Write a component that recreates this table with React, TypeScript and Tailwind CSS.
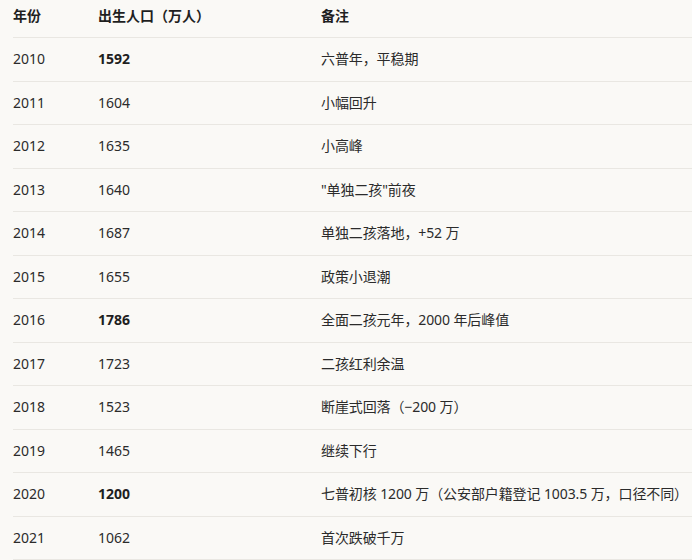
const rows: { year: string; births: string; note: string; bold?: boolean }[] = [
  { year: '2010', births: '1592', note: '六普年，平稳期', bold: true },
  { year: '2011', births: '1604', note: '小幅回升' },
  { year: '2012', births: '1635', note: '小高峰' },
  { year: '2013', births: '1640', note: '"单独二孩"前夜' },
  { year: '2014', births: '1687', note: '单独二孩落地，+52 万' },
  { year: '2015', births: '1655', note: '政策小退潮' },
  { year: '2016', births: '1786', note: '全面二孩元年，2000 年后峰值', bold: true },
  { year: '2017', births: '1723', note: '二孩红利余温' },
  { year: '2018', births: '1523', note: '断崖式回落（−200 万）' },
  { year: '2019', births: '1465', note: '继续下行' },
  { year: '2020', births: '1200', note: '七普初核 1200 万（公安部户籍登记 1003.5 万，口径不同）', bold: true },
  { year: '2021', births: '1062', note: '首次跌破千万' },
]

export default function App() {
  return (
    <div
      className="min-h-[560px] bg-[#faf9f6] pl-[13px] text-[14px] text-[#2b2b2b]"
      style={{ fontFamily: '"Segoe UI", "Noto Sans", "Noto Sans CJK SC", sans-serif' }}
    >
      <div className="grid grid-cols-[85px_223px_1fr] border-b border-[#e9e7e2] pt-[6px] pb-[11px] font-semibold leading-5 text-[#1f1f1f]">
        <div>年份</div>
        <div>出生人口（万人）</div>
        <div>备注</div>
      </div>
      {rows.map((r) => (
        <div
          key={r.year}
          className="grid grid-cols-[85px_223px_1fr] items-center border-b border-[#e9e7e2] py-[11.25px] leading-5 whitespace-nowrap"
        >
          <div>{r.year}</div>
          <div className={r.bold ? 'font-bold text-[#1f1f1f]' : ''}>{r.births}</div>
          <div className="tracking-[-0.1px]">{r.note}</div>
        </div>
      ))}
    </div>
  )
}
